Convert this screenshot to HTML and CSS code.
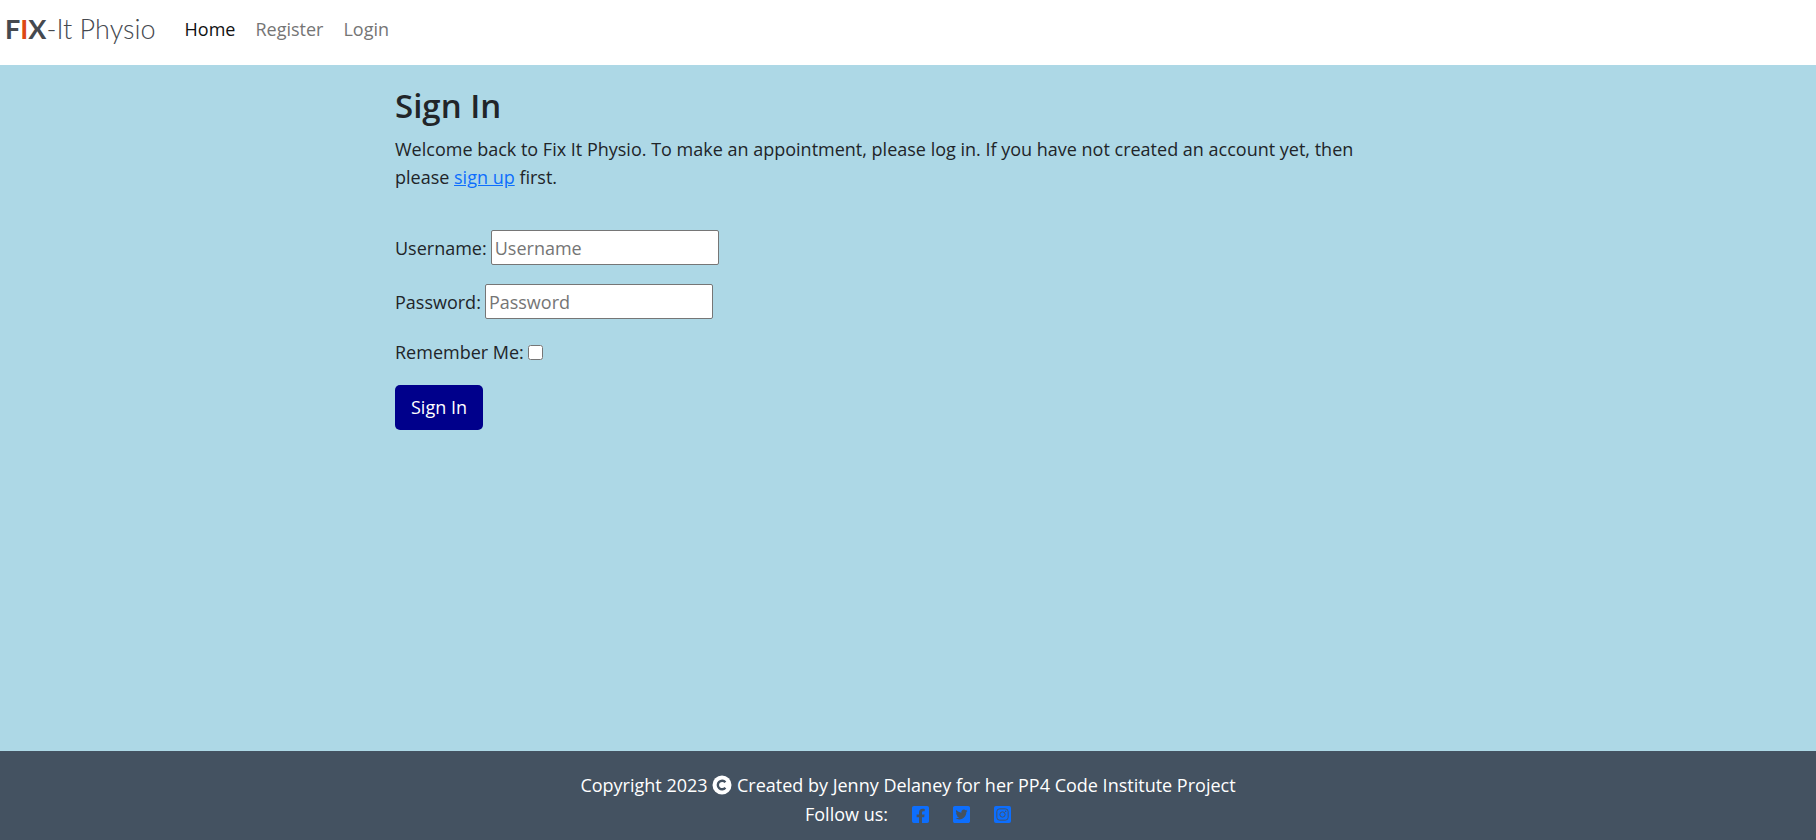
FILE: index.html
```html
<!DOCTYPE html>
<html lang="en">
<head>
<meta charset="utf-8">
<meta name="viewport" content="width=device-width, initial-scale=1">
<title>FIX-It Physio</title>
<link rel="stylesheet" href="styles.css">
</head>
<body>
<header class="navbar">
  <a class="brand" href="#"><strong>F<span class="brand-accent">I</span>X</strong>-It Physio</a>
  <nav class="nav">
    <a class="nav-link active" href="#">Home</a>
    <a class="nav-link" href="#">Register</a>
    <a class="nav-link" href="#">Login</a>
  </nav>
</header>
<main class="content">
  <h1 class="title">Sign In</h1>
  <p class="intro">Welcome back to Fix It Physio. To make an appointment, please log in. If you have not created an account yet, then please <a class="link" href="#">sign up</a> first.</p>
  <form class="form">
    <div class="field"><label for="username">Username:</label><input class="text-input" id="username" type="text" placeholder="Username"></div>
    <div class="field"><label for="password">Password:</label><input class="text-input" id="password" type="password" placeholder="Password"></div>
    <div class="field"><label for="remember">Remember Me:</label><input class="check" id="remember" type="checkbox"></div>
    <button class="button" type="submit">Sign In</button>
  </form>
</main>
<footer class="footer">
  <p class="footer-line">Copyright 2023
    <svg class="icon-copyright" viewBox="0 0 20 20" aria-hidden="true"><circle cx="10" cy="10" r="9.5" fill="#fff"/><path d="M13.4 7.2a4.3 4.3 0 1 0 0 5.6" fill="none" stroke="#445261" stroke-width="2.4"/></svg>
    Created by Jenny Delaney for her PP4 Code Institute Project</p>
  <div class="footer-line social">
    <span>Follow us:</span>
    <a class="social-link" href="#" aria-label="Facebook"><svg class="icon" viewBox="0 0 448 448"><path fill="currentColor" d="M400 0H48A48 48 0 0 0 0 48v352a48 48 0 0 0 48 48h137.300V295.700h-63V224h63v-54.600c0-62.200 37-96.500 93.700-96.500 27.100 0 55.500 4.800 55.500 4.800v61h-31.300c-30.800 0-40.400 19.100-40.400 38.700V224h68.800l-11 71.700h-57.800V448H400a48 48 0 0 0 48-48V48a48 48 0 0 0-48-48z"/></svg></a>
    <a class="social-link" href="#" aria-label="Twitter"><svg class="icon" viewBox="0 0 448 448"><path fill="currentColor" d="M400 0H48C21.500 0 0 21.500 0 48v352c0 26.500 21.500 48 48 48h352c26.500 0 48-21.500 48-48V48c0-26.500-21.500-48-48-48zm-48.900 158.800c.2 2.800.2 5.700.2 8.500 0 86.700-66 186.600-186.600 186.600-37.200 0-71.700-10.800-100.700-29.400 5.300.6 10.400.8 15.800.8 30.700 0 58.900-10.400 81.400-28-28.800-.6-53-19.500-61.300-45.500 10.100 1.500 19.200 1.500 29.600-1.200-30-6.100-52.500-32.500-52.500-64.400v-.8c8.700 4.900 18.900 7.900 29.600 8.300a65.447 65.447 0 0 1-29.200-54.600c0-12.200 3.200-23.400 8.900-33.100 32.300 39.800 80.800 65.800 135.200 68.600-9.300-44.500 24-80.600 64-80.600 18.900 0 35.900 7.900 47.900 20.700 14.800-2.800 29-8.300 41.600-15.800-4.900 15.200-15.200 28-28.800 36.100 13.200-1.400 26-5.100 37.800-10.200-8.900 13.100-20.100 24.700-32.900 34z"/></svg></a>
    <a class="social-link" href="#" aria-label="Instagram"><svg class="icon" viewBox="0 0 18 18"><rect width="18" height="18" rx="2" fill="currentColor"/><g fill="none" stroke="#445261"><rect x="3" y="3" width="12" height="12" rx="3"/><circle cx="9" cy="9" r="2.800"/></g><circle cx="12.400" cy="5.600" r=".8" fill="#445261"/></svg></a>
  </div>
</footer>
</body>
</html>
```
FILE: styles.css
```css
* { box-sizing: border-box; }

body {
  margin: 0;
  min-height: 100vh;
  display: flex;
  flex-direction: column;
  background: #add8e6;
  color: #212529;
  font-family: "Open Sans", "Noto Sans", sans-serif;
  font-size: 18px;
  line-height: 28px;
}

.navbar {
  display: flex;
  align-items: center;
  gap: 19px;
  padding: 8px 5px 15px;
  background: #fff;
}

.brand {
  color: #45494f;
  font-family: Lato, sans-serif;
  font-size: 27px;
  font-weight: 300;
  line-height: 42px;
  text-decoration: none;
}
.brand strong { font-weight: 700; }
.brand-accent { color: #dd4814; }

.nav { display: flex; }
.nav-link { padding: 0 10px; color: #757575; text-decoration: none; }
.nav-link.active { color: #111; }

.content {
  flex: 1;
  width: 100%;
  max-width: 1026px;
  margin: 0 auto;
  padding: 20px 0;
}

.title { margin: 0 0 8px; font-size: 33px; font-weight: 600; line-height: 42px; }
.intro { max-width: 1000px; margin: 0 0 39px; }
.link { color: #0d6efd; }

.form { display: flex; flex-direction: column; align-items: flex-start; gap: 19px; }
.field { display: flex; align-items: center; gap: 4px; }
.text-input {
  width: 228px;
  height: 35px;
  padding: 1px 3px;
  border: 1px solid #767676;
  border-radius: 2px;
  background: #fff;
  font: inherit;
}
.text-input::placeholder { color: #757575; }
.check { width: 15px; height: 15px; margin: 0; }
.button {
  padding: 8px 16px 9px;
  border: 0;
  border-radius: 5px;
  background: #00008b;
  color: #fff;
  font: inherit;
}

.footer { padding: 20px 12px 12px; background: #445261; color: #fff; text-align: center; }
.footer-line { margin: 0; }
.footer-line + .footer-line { margin-top: 1px; }
.icon-copyright { width: 20px; height: 20px; vertical-align: -3px; }
.social { display: flex; justify-content: center; align-items: center; gap: 24px; }
.social-link { display: flex; color: #0d6efd; }
.icon { width: 17px; height: 17px; }
```
